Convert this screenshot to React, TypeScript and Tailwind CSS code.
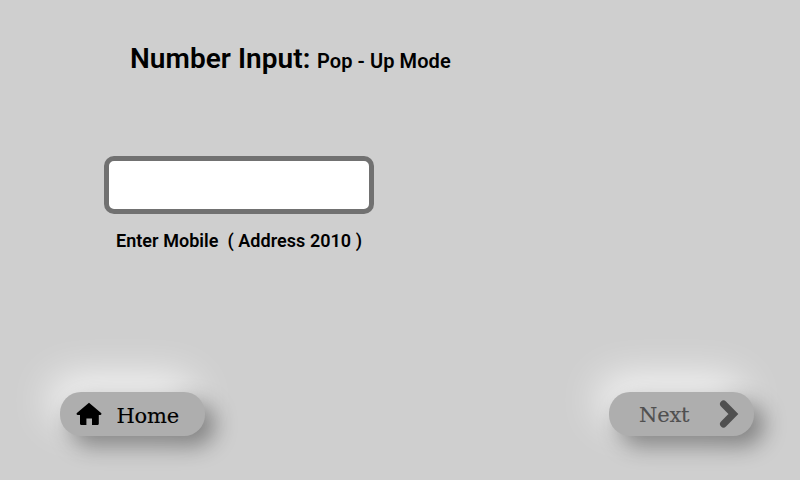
import type { ReactNode } from "react";

function HomeIcon() {
  return (
    <svg width="26" height="24" viewBox="0 0 26 24" className="block">
      <path
        d="M13 .8 L25.4 11.2 Q25.7 12.9 24.4 13 H22.8 V21.8 Q22.8 22.9 21.8 22.9 H16 V16.6 H10.4 V22.9 H5 Q4 22.9 4 21.8 V13 H1.6 Q.3 12.9 .6 11.2 Z"
        fill="#000"
      />
    </svg>
  );
}

function ChevronIcon() {
  return (
    <svg width="20" height="30" viewBox="0 0 20 30" className="block">
      <path
        d="M4.5 5 L14.4 15 L4.5 25"
        fill="none"
        stroke="#505050"
        strokeWidth="7"
        strokeLinecap="round"
        strokeLinejoin="miter"
      />
    </svg>
  );
}

function PillButton({ className, children }: { className: string; children: ReactNode }) {
  return (
    <button
      className={`flex h-[44px] w-[145px] items-start rounded-[21px] bg-[#aeaeae] font-['DejaVu_Serif',serif] text-[21px] leading-[24px] [-webkit-text-stroke:0.15px_currentColor] shadow-[10px_10px_22px_rgba(0,0,0,0.39),-10px_-14px_42px_rgba(255,255,255,0.9)] ${className}`}
    >
      {children}
    </button>
  );
}

export default function App() {
  return (
    <main className="flex h-[480px] w-[800px] flex-col overflow-hidden bg-[#cfcfcf] font-['Roboto',sans-serif] text-black">
      <h1 className="flex h-[156px] items-baseline pt-[42px] pl-[130px] whitespace-pre">
        <span className="w-[187px] text-[28px] leading-[33px] font-semibold tracking-[0.05px]">Number Input:</span>
        <span className="text-[20px] leading-[24px] font-semibold tracking-[0.08px]">Pop - Up Mode</span>
      </h1>
      <div className="ml-[104px] flex w-[270px] flex-col">
        <input className="h-[58px] w-[270px] rounded-[10px] border-[5px] border-[#717171] bg-white px-2 outline-none" />
        <label className="mt-[16px] pl-[12px] text-[18px] leading-[22px] font-semibold tracking-[0.04px] whitespace-pre">
          {"Enter Mobile  ( Address 2010 )"}
        </label>
      </div>
      <nav className="mt-auto mb-[44px] flex justify-between pr-[46px] pl-[60px]">
        <PillButton className="pl-[16px] text-black">
          <span className="mt-[10px] w-[40.5px]"><HomeIcon /></span>
          <span className="mt-[12px] tracking-[-0.2px]">Home</span>
        </PillButton>
        <PillButton className="pl-[30px] text-[#505050]">
          <span className="mt-[11px] w-[80px] text-left tracking-[-0.2px]">Next</span>
          <span className="mt-[7px]"><ChevronIcon /></span>
        </PillButton>
      </nav>
    </main>
  );
}
